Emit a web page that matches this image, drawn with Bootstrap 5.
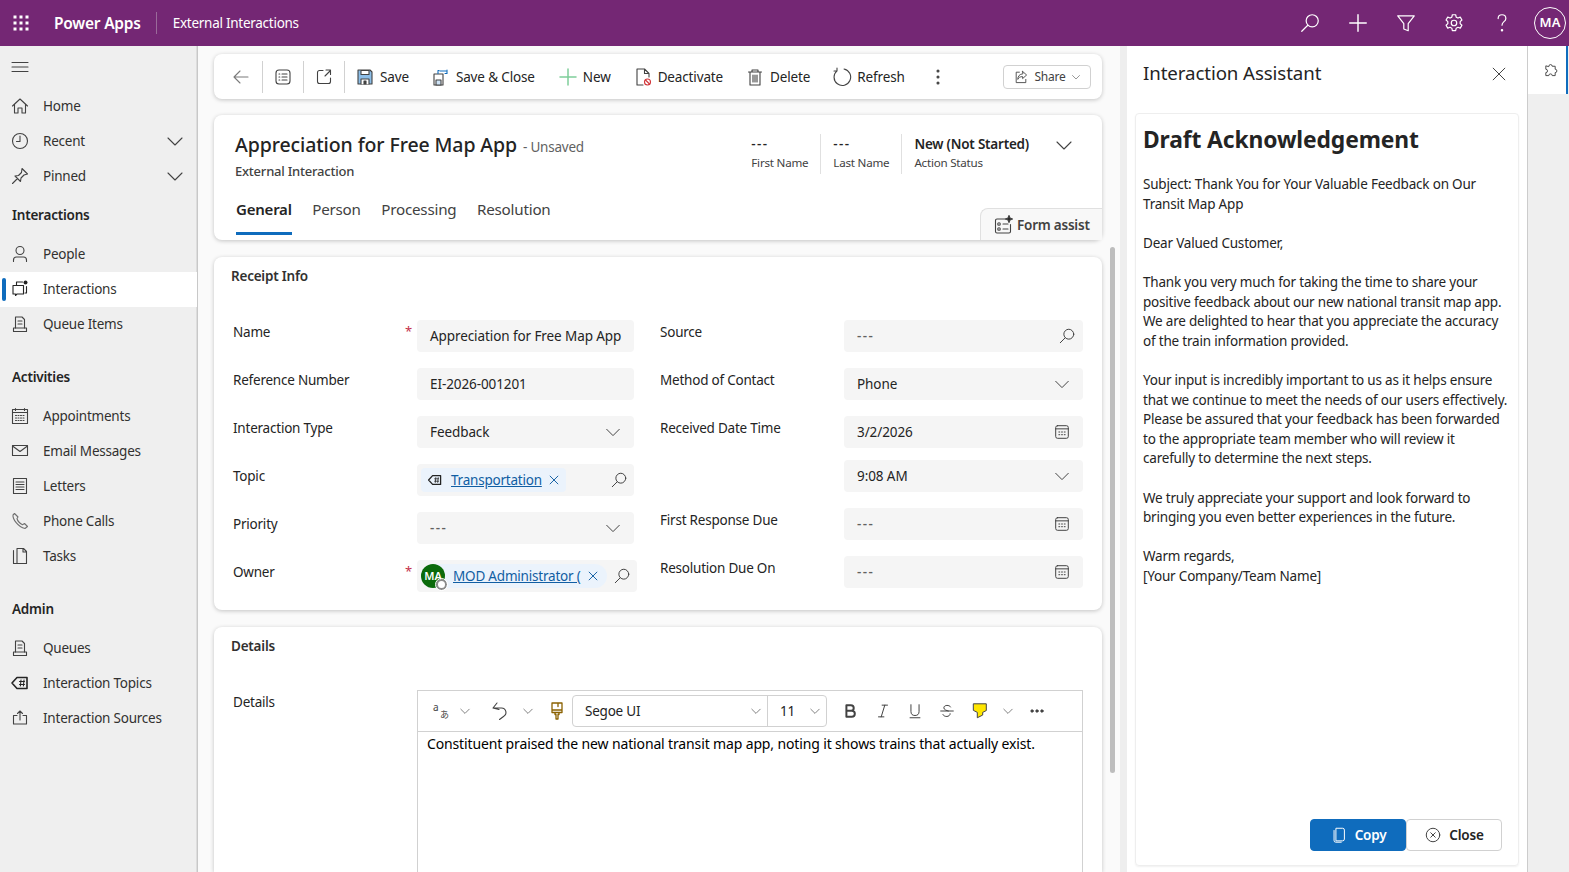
<!DOCTYPE html>
<html lang="en"><head><meta charset="utf-8"><title>External Interactions</title>
<link href="https://cdn.jsdelivr.net/npm/bootstrap@5.3.0/dist/css/bootstrap.min.css" rel="stylesheet">
<style>
html,body{height:100%;overflow:hidden}
body{font-family:"Noto Sans","Open Sans",sans-serif;font-size:13.5px;letter-spacing:-.22px;color:#242424;background:#faf9f8}
svg.ic{width:20px;height:20px;flex:none;fill:none;stroke:#424242;stroke-width:1.1;stroke-linecap:round;stroke-linejoin:round}
svg.ic.soft{stroke:#707070}
svg.ic.dark{stroke:#242424}
.topbar{height:46px;background:#742774;color:#fff;flex:none}
.topbar svg.ic{stroke:#fff}
.waffle{width:42px}
.brand{font-size:15.5px;font-weight:600;padding:0 15px 0 12px;border-right:1px solid #9a6a9a;line-height:22px}
.envname{padding-left:16px;font-size:13.5px;letter-spacing:-.27px}
.tact{width:48px;justify-content:center}
.tact svg.ic{width:22px;height:22px}
.avatar{width:32px;height:32px;border:1px solid #fff;border-radius:50%;font-size:13px;font-weight:600;margin:0 3px 0 8px;letter-spacing:0}
.workspace{height:826px}
.sidenav{width:198px;background:#efefef;border-right:1px solid #c8c8c8;flex:none;box-shadow:inset -1px 0 0 #ddd}
.burger{height:42.5px;padding-left:10px}
.navrow{height:35px;padding-left:10px;color:#323130;position:relative}
.navrow .lbl{margin-left:13px}
.navrow .chev{margin-left:auto;margin-right:12px}
.navrow.sel{background:#fff}
.navrow.sel::before{content:"";position:absolute;left:2px;top:6px;bottom:6px;width:4px;background:#0f6cbd;border-radius:2px}
.navhead{height:43px;padding-left:12px;font-weight:600;color:#242424}
.navgap{margin-top:14px}
.mainarea{width:922px;height:826px;overflow:hidden;padding:8px 18px 0 16px;position:relative;flex:none;background:#fafafa}
.sheet{background:#fff;border-radius:8px;box-shadow:0 1px 4px rgba(0,0,0,.22);border:0}
.cmdbar{height:45px;margin-bottom:16px;padding:0 11px 0 17px}
.cmd{height:45px;white-space:nowrap;color:#242424;letter-spacing:-.14px}
.cmd svg.ic{margin-right:5px}
.cmd span{padding-top:2px}
.cgap{margin-right:22px}
.cgap1{margin-right:23px}
.cmd svg.solo{margin-right:0}
.cmd svg.back{margin-right:11px}
.vsep{width:1px;height:32px;background:#d1d1d1;margin:0 10px 0 0}
.vsep.wide{margin-left:10px}
.dots3{margin-left:23px}
.sharebtn{height:24px;width:88px;border:1px solid #d1d1d1;border-radius:4px;font-size:12px;color:#424242;margin-left:auto;gap:5px;margin-right:0}
.sharebtn svg.ic{width:16px;height:16px}
.sharebtn svg.tiny{width:10px;height:10px}
.headcard{height:125px;margin-bottom:17px;position:relative}
.rectitle{font-size:19.5px;font-weight:500;color:#242424;letter-spacing:-.1px;line-height:28px}
.unsaved{color:#616161;margin-left:6px}
.entity{font-size:13px;font-weight:500;color:#424242;line-height:18px;margin-top:3px}
.headtop{padding:16px 28px 0 21px;height:79px}
.sumf{padding:0 12px;height:40px;margin-top:3px;font-size:11.6px;line-height:17px;white-space:nowrap;color:#424242}
.sumf b{display:block;font-size:13.5px;font-weight:600;line-height:20px;color:#242424}
.sumf b.dash{font-weight:500;letter-spacing:1.4px}
.sumf+.sumf{border-left:1px solid #e0e0e0}
.sumchev{margin-top:4px;margin-left:13px}
.tabline{padding-left:22px;gap:20.5px;height:46px;font-size:15.2px;color:#424242}
.tabx{height:46px;line-height:30px;white-space:nowrap}
.tabx.on{font-weight:600;color:#242424;border-bottom:3px solid #0f6cbd;height:41px;align-self:flex-start;font-size:15px}
.formassist{margin-left:auto;width:122px;height:32px;background:#f8f8f8;border-top:1px solid #e0e0e0;border-left:1px solid #e0e0e0;border-top-left-radius:8px;font-weight:600;font-size:13.5px;gap:4px;padding:1px 0 0 12px;align-self:flex-end}
.sectitle{font-weight:600;color:#323130;line-height:20px}
.receipt{height:353px;margin-bottom:17px;padding:9px 19px 0 17px}
.formcols{margin-top:34px;margin-left:2px;gap:26px}
.fcol{width:401px;flex:none}
.fcol2{width:423px;flex:none}
.frow{height:32px;margin-bottom:16px;position:relative}
.frow.tight{margin-bottom:12px}
.flabel{width:184px;flex:none;line-height:24px;color:#242424}
.star{position:absolute;left:172px;top:2px;color:#c4314b;font-size:13px}
.fbox{flex:1;height:32px;background:#f5f5f5;border-radius:4px;padding:0 12px 0 13px;min-width:0;white-space:nowrap;letter-spacing:-.09px}
.fbox .endic{margin-left:auto}
.fbox svg.ic{width:18px;height:18px}
.fbox svg.srch{margin-right:-5px}
.fbox svg.srch2{margin-right:2px}
.muted{color:#616161;letter-spacing:1.4px;font-weight:500}
.tagbox{padding:0 4px;margin-right:0}
.topictag{height:24px;background:#ebf3fc;border-radius:4px;width:145px;padding-left:6px;letter-spacing:-.22px}
.topictag svg.ic{width:16px;height:16px;margin-right:8px;stroke:#242424}
.alink{color:#115ea3;text-decoration:underline}
svg.ic.xic,.topictag svg.ic.xic{width:12px;height:12px;stroke:#115ea3;stroke-width:1.6;margin-left:6px;margin-right:0}
.ownerbox{flex:none;width:220px;letter-spacing:-.2px}
.ownertag{height:24px;background:#ebf3fc;border-radius:12px;width:186px;position:relative}
.ava{width:24px;height:24px;border-radius:50%;background:#0b6a0b;color:#fff;font-size:11px;font-weight:600;flex:none;position:relative;letter-spacing:0}
.ava::after{content:"";position:absolute;right:-2px;bottom:-2px;width:11px;height:11px;border-radius:50%;background:#fff;border:2px solid #8a8a8a;outline:1px solid #fff}
.ownername{width:132px;margin-left:8px;white-space:nowrap}
.ownertag svg.ic.xic{margin-left:2px}
.detailcard{height:245px;padding:9px 19px 0 17px;border-radius:8px 8px 0 0}
.dbody{margin-top:34px;margin-left:2px}
.editor{flex:1;border:1px solid #d1d1d1;border-bottom:0;height:182px}
.edbar{height:41px;border-bottom:1px solid #d1d1d1;padding-left:15px;position:relative}
.edbar svg.ic{width:18px;height:18px}
.edbar svg.mini{width:12px;height:12px}
.edbar svg.tall{width:20px;height:20px;margin:0 -1px}
.transl{width:18px;height:18px;font-size:10px;line-height:10px;letter-spacing:0;position:relative;flex:none;color:#424242}
.transl i{font-style:normal;display:block}
.transl i+i{font-family:"Noto Sans CJK JP",sans-serif;font-size:9px;margin:-2px 0 0 7px}
.fontsel{height:32px;border:1px solid #d1d1d1;border-radius:4px;width:255px;margin:0 6px 0 6px}
.fs1{width:195px;height:30px;padding-left:12px;border-right:1px solid #d1d1d1}
.fs2{flex:1;height:30px;padding-left:12px}
.fontsel svg{margin-left:auto;margin-right:5px}
.edtext{padding:2px 9px;font-size:14px;line-height:20px;color:#000;letter-spacing:-.14px}
.m8{margin-left:8px}.m14r{margin-right:14px}.m15r{margin-right:15px}.m20r{margin-right:20px}
.m14x{margin:0 14px 0 13px}.m13r{margin-right:13px}
.ms8{margin-left:8px}
.thumb{position:absolute;right:5px;top:201px;width:5px;height:526px;background:#bdbdbd;border-radius:3px}
.gutter{width:7px;background:#eee;flex:none}
.assist{width:400px;background:#fff;flex:none}
.asshead{height:67px;padding:0 19px 12px 16px;font-size:18.7px;font-weight:400;letter-spacing:-.1px;color:#242424}
.asshead svg.ic{width:18px;height:18px}
.asscard{height:753px;margin:0 8px 0 8px;border:1px solid #eee;border-radius:4px;padding:8px 8px 8px 7px;position:relative;box-shadow:0 1px 2px rgba(0,0,0,.06)}
.asstitle{font-size:22.8px;font-weight:700;line-height:36px;color:#242424;letter-spacing:-.1px;margin:0 0 17px}
.asstext{white-space:pre-line;line-height:19.6px;font-size:13.5px;color:#242424;margin:0;letter-spacing:-.2px}
.assbtns{position:absolute;right:16px;bottom:14px}
.bcopy,.bclose{height:32px;width:96px;border-radius:4px;font-weight:600;font-size:13.5px;gap:7px;padding:0;letter-spacing:-.2px;--bs-btn-border-radius:4px}
.bcopy{background:#0f6cbd;color:#fff;border:1px solid #0f6cbd}
.bcopy svg.ic{stroke:#fff;width:18px;height:18px}
.bclose{background:#fff;color:#242424;border:1px solid #d1d1d1}
.bclose svg.ic{width:18px;height:18px}
.rail{width:42px;background:#efefef;border-left:1px solid #ccc;flex:1}
.railtab{height:48px;background:#fff;border-right:2px solid #0f6cbd;margin-right:1px;padding-left:14px}
.railtab svg.ic{width:17px;height:17px}
</style></head><body>
<svg class="d-none" xmlns="http://www.w3.org/2000/svg">
<symbol id="i-search" viewBox="0 0 20 20"><circle cx="12" cy="8" r="5.5"/><path d="M8 12l-5.5 5.5"/></symbol>
<symbol id="i-chev" viewBox="0 0 20 20"><path d="M3 7l7 7 7-7"/></symbol>
<symbol id="i-cal" viewBox="0 0 20 20"><rect x="3" y="3" width="14" height="14" rx="2"/><path d="M3 6.500h14"/><path d="M6.500 10h1M9.500 10h1M12.500 10h1M6.500 13h1M9.500 13h1M12.500 13h1"/></symbol>
<symbol id="i-queue" viewBox="0 0 20 20"><path d="M5.500 14V3h6.500l2.500 2.500V14"/><path d="M3.500 14v3.500h13V14zM8 7h4M8 10h4"/></symbol>
<symbol id="i-topic" viewBox="0 0 20 20"><path d="M7 4.500h10v11H7l-5-5.500z" stroke-width="1.600"/><path d="M9.500 8.500h5M9.500 11.500h5M11 7l-.6 6M14 7l-.6 6" stroke-width="1"/></symbol>
<symbol id="i-x" viewBox="0 0 20 20"><path d="M3.500 3.500l13 13M16.500 3.500l-13 13"/></symbol>
<symbol id="i-inter" viewBox="0 0 20 20"><path d="M6.500 6V3h6M3 6.500h10.500v8.500H7l-1.500 1.500V15H3zM16.500 7.500V14H15"/><circle cx="15.500" cy="3.500" r="2" fill="#242424" stroke="none"/></symbol>
</svg>

<header class="topbar d-flex align-items-center">
  <div class="waffle d-flex justify-content-center"><svg class="ic" viewBox="0 0 20 20"><g fill="#fff" stroke="none"><rect x="2.500" y="2.500" width="3" height="3"/><rect x="8.500" y="2.500" width="3" height="3"/><rect x="14.500" y="2.500" width="3" height="3"/><rect x="2.500" y="8.500" width="3" height="3"/><rect x="8.500" y="8.500" width="3" height="3"/><rect x="14.500" y="8.500" width="3" height="3"/><rect x="2.500" y="14.500" width="3" height="3"/><rect x="8.500" y="14.500" width="3" height="3"/><rect x="14.500" y="14.500" width="3" height="3"/></g></svg></div>
  <span class="brand">Power Apps</span><span class="envname">External Interactions</span>
  <div class="ms-auto d-flex align-items-center">
    <div class="tact d-flex"><svg class="ic"><use href="#i-search"/></svg></div>
    <div class="tact d-flex"><svg class="ic" viewBox="0 0 20 20"><path d="M10 2.500v15M2.500 10h15" stroke-width="1.300"/></svg></div>
    <div class="tact d-flex"><svg class="ic" viewBox="0 0 20 20"><path d="M2.500 3.500h15L12 10.500v6.500l-4-1.500v-5z"/></svg></div>
    <div class="tact d-flex"><svg class="ic" viewBox="0 0 20 20"><path d="M8.500 2.500h3l.5 2.200 1.600.8 2.100-.8 1.500 2.600-1.600 1.500v1.800l1.600 1.500-1.500 2.600-2.100-.8-1.600.8-.5 2.200h-3l-.5-2.200-1.600-.8-2.100.8-1.500-2.600 1.600-1.500V8.800L2.800 7.300l1.500-2.600 2.100.8L8 4.700z"/><circle cx="10" cy="10" r="2.500"/></svg></div>
    <div class="tact d-flex"><svg class="ic" viewBox="0 0 20 20"><path d="M6.500 6c0-2.200 1.500-3.500 3.500-3.500s3.500 1.400 3.500 3.300c0 3-3.500 3-3.500 6.200"/><circle cx="10" cy="16.500" r=".6" fill="#fff"/></svg></div>
    <div class="avatar d-flex align-items-center justify-content-center">MA</div>
  </div>
</header>

<div class="workspace d-flex">
  <nav class="sidenav">
    <div class="burger d-flex align-items-center"><svg class="ic" viewBox="0 0 20 20"><path d="M2 5.500h16M2 10h16M2 14.500h16"/></svg></div>
    <div class="navrow d-flex align-items-center"><svg class="ic" viewBox="0 0 20 20"><path d="M2.500 10L10 3l7.500 7M4.500 8.500V17h3.500v-5h4v5h3.500V8.500"/></svg><span class="lbl">Home</span></div>
    <div class="navrow d-flex align-items-center"><svg class="ic" viewBox="0 0 20 20"><circle cx="10" cy="10" r="7.500"/><path d="M10 5v5.500H6.500"/></svg><span class="lbl">Recent</span><svg class="ic chev"><use href="#i-chev"/></svg></div>
    <div class="navrow d-flex align-items-center"><svg class="ic" viewBox="0 0 20 20"><path d="M12 2.500l5.500 5.500-3.500 1-3 3-.5 3.500L5 10l3.500-.5 3-3zM7.500 12.500L2.500 17.500"/></svg><span class="lbl">Pinned</span><svg class="ic chev"><use href="#i-chev"/></svg></div>
    <div class="navhead d-flex align-items-center">Interactions</div>
    <div class="navrow d-flex align-items-center"><svg class="ic" viewBox="0 0 20 20"><circle cx="10" cy="6.500" r="4"/><path d="M3.500 17.500v-1.500c0-2 1.500-3 3-3h7c1.500 0 3 1 3 3v1.500"/></svg><span class="lbl">People</span></div>
    <div class="navrow sel d-flex align-items-center"><svg class="ic dark"><use href="#i-inter"/></svg><span class="lbl">Interactions</span></div>
    <div class="navrow d-flex align-items-center"><svg class="ic"><use href="#i-queue"/></svg><span class="lbl">Queue Items</span></div>
    <div class="navhead navgap d-flex align-items-center">Activities</div>
    <div class="navrow d-flex align-items-center"><svg class="ic" viewBox="0 0 20 20"><path d="M2.500 3.500h15v14h-15zM2.500 6.500h15M5.500 2.500v2M14.500 2.500v2"/><path d="M5.500 9.500h9M5.500 12h9M5.500 14.500h9" stroke-dasharray="1 1.500"/></svg><span class="lbl">Appointments</span></div>
    <div class="navrow d-flex align-items-center"><svg class="ic" viewBox="0 0 20 20"><rect x="2.500" y="4.500" width="15" height="10"/><path d="M2.500 5l7.500 5.500L17.500 5"/></svg><span class="lbl">Email Messages</span></div>
    <div class="navrow d-flex align-items-center"><svg class="ic" viewBox="0 0 20 20"><rect x="3.500" y="2.500" width="13" height="15"/><path d="M6 6h8M6 8.500h8M6 11h8M6 13.500h8"/></svg><span class="lbl">Letters</span></div>
    <div class="navrow d-flex align-items-center"><svg class="ic soft" viewBox="0 0 20 20"><path d="M4.500 2.500L3 4c-.5 4 5 12 12 13.500l2.500-2-3-3-2 1.200C10 12.500 7.500 9.500 7 7.500l1-1.500z"/></svg><span class="lbl">Phone Calls</span></div>
    <div class="navrow d-flex align-items-center"><svg class="ic" viewBox="0 0 20 20"><path d="M3.500 4.500v13H7M7 2.500h6.500l3 3v12H7zM13 2.500V6h3.500"/></svg><span class="lbl">Tasks</span></div>
    <div class="navhead navgap d-flex align-items-center">Admin</div>
    <div class="navrow d-flex align-items-center"><svg class="ic"><use href="#i-queue"/></svg><span class="lbl">Queues</span></div>
    <div class="navrow d-flex align-items-center"><svg class="ic dark"><use href="#i-topic"/></svg><span class="lbl">Interaction Topics</span></div>
    <div class="navrow d-flex align-items-center"><svg class="ic" viewBox="0 0 20 20"><path d="M7 7.500H3.500V16h13V7.500H13M10 12V3M7.500 5.500L10 3l2.500 2.500"/></svg><span class="lbl">Interaction Sources</span></div>
  </nav>

  <main class="mainarea">
    <div class="sheet cmdbar d-flex align-items-center">
      <div class="cmd d-flex align-items-center"><svg class="ic back" viewBox="0 0 20 20"><path d="M17 10H3M9 4l-6 6 6 6" stroke="#7a7a7a"/></svg></div>
      <div class="vsep"></div>
      <div class="cmd d-flex align-items-center"><svg class="ic solo" viewBox="0 0 20 20"><rect x="3" y="3" width="14" height="14" rx="3"/><path d="M9 7h5M9 10h5M9 13h5M6 7h.8M6 10h.8M6 13h.8"/></svg></div>
      <div class="vsep wide"></div>
      <div class="cmd d-flex align-items-center"><svg class="ic solo" viewBox="0 0 20 20"><path d="M9 3.500H5.500a2 2 0 0 0-2 2v9a2 2 0 0 0 2 2h9a2 2 0 0 0 2-2V11M11 9l5.500-5.500M12 3h4.500v4.500"/></svg></div>
      <div class="vsep wide"></div>
      <div class="cmd cgap d-flex align-items-center"><svg class="ic" viewBox="0 0 20 20"><path d="M3 3h12l2 2v12H3z" fill="#8cbee8" stroke="#424242"/><path d="M6 3.500h8v4H6z" fill="#fff"/><path d="M6 17v-5h8v5" fill="#fff"/><path d="M9 14h2v3H9z" fill="#424242"/></svg><span>Save</span></div>
      <div class="cmd cgap1 d-flex align-items-center"><svg class="ic" viewBox="0 0 20 20"><path d="M3 7h9v11H3z"/><path d="M5 13h5v5H5z" fill="#cfe4f7"/><path d="M8 3.500h-1v3M16 3v3.500h-2M9 4h6" stroke="#0f6cbd"/></svg><span>Save &amp; Close</span></div>
      <div class="cmd cgap d-flex align-items-center"><svg class="ic" viewBox="0 0 20 20"><path d="M10 2v16M2 10h16" stroke="#7fce9a" stroke-width="1.500"/></svg><span>New</span></div>
      <div class="cmd cgap d-flex align-items-center"><svg class="ic" viewBox="0 0 20 20"><path d="M10 18H4V2h7.500L16 6.500V10M11.500 2v4.500H16"/><circle cx="14.500" cy="15" r="3" stroke="#d13438" fill="#fff"/><path d="M12.500 13l4 4" stroke="#d13438"/></svg><span>Deactivate</span></div>
      <div class="cmd cgap d-flex align-items-center"><svg class="ic" viewBox="0 0 20 20"><path d="M3.500 5h13M7 5V3h6v2M5 5v13h10V5M8 8v7M10 8v7M12 8v7"/></svg><span>Delete</span></div>
      <div class="cmd d-flex align-items-center"><svg class="ic" viewBox="0 0 20 20"><path d="M12 2A8.300 8.300 0 1 1 5 3.800M5 1v3H2"/></svg><span>Refresh</span></div>
      <svg class="ic dots3" viewBox="0 0 20 20"><circle cx="10" cy="4" r="1" fill="#424242"/><circle cx="10" cy="10" r="1" fill="#424242"/><circle cx="10" cy="16" r="1" fill="#424242"/></svg>
      <div class="sharebtn d-flex align-items-center justify-content-center"><svg class="ic" viewBox="0 0 20 20"><path d="M8 4H4v13h12v-4M12 3l5 4.500-5 4.500V9.500c-3 0-5 1-6 3.500 0-4 2-6.500 6-7z"/></svg>Share<svg class="ic tiny"><use href="#i-chev"/></svg></div>
    </div>

    <div class="sheet headcard">
      <div class="headtop d-flex">
        <div>
          <div class="d-flex align-items-baseline"><span class="rectitle">Appreciation for Free Map App</span><span class="unsaved">- Unsaved</span></div>
          <div class="entity">External Interaction</div>
        </div>
        <div class="ms-auto d-flex align-items-start">
          <div class="sumf"><b class="dash">---</b>First Name</div>
          <div class="sumf"><b class="dash">---</b>Last Name</div>
          <div class="sumf"><b>New (Not Started)</b>Action Status</div>
          <svg class="ic sumchev"><use href="#i-chev"/></svg>
        </div>
      </div>
      <div class="tabline d-flex">
        <div class="tabx on">General</div><div class="tabx">Person</div><div class="tabx">Processing</div><div class="tabx">Resolution</div>
        <div class="formassist d-flex align-items-center"><svg class="ic" viewBox="0 0 20 20"><path d="M12.500 4H4a1.500 1.500 0 0 0-1.500 1.500v11A1.500 1.500 0 0 0 4 18h12a1.500 1.500 0 0 0 1.500-1.500V9.500M10 9h5M10 14h5"/><circle cx="6" cy="9" r="1.300"/><circle cx="6" cy="14" r="1.300"/><path d="M16 .5l1 2.500 2.500 1-2.500 1-1 2.500-1-2.500-2.500-1 2.500-1z" fill="#242424"/></svg>Form assist</div>
      </div>
    </div>

    <section class="sheet receipt">
      <div class="sectitle">Receipt Info</div>
      <div class="formcols d-flex">
        <div class="fcol">
          <div class="frow d-flex"><div class="flabel">Name</div><span class="star">*</span><div class="fbox d-flex align-items-center">Appreciation for Free Map App</div></div>
          <div class="frow d-flex"><div class="flabel">Reference Number</div><div class="fbox d-flex align-items-center">EI-2026-001201</div></div>
          <div class="frow d-flex"><div class="flabel">Interaction Type</div><div class="fbox d-flex align-items-center">Feedback<svg class="ic endic"><use href="#i-chev"/></svg></div></div>
          <div class="frow d-flex"><div class="flabel">Topic</div><div class="fbox tagbox d-flex align-items-center"><div class="topictag d-flex align-items-center"><svg class="ic"><use href="#i-topic"/></svg><a class="alink" href="#">Transportation</a><svg class="ic xic"><use href="#i-x"/></svg></div><svg class="ic endic srch2"><use href="#i-search"/></svg></div></div>
          <div class="frow d-flex"><div class="flabel">Priority</div><div class="fbox d-flex align-items-center"><span class="muted">---</span><svg class="ic endic"><use href="#i-chev"/></svg></div></div>
          <div class="frow d-flex"><div class="flabel">Owner</div><span class="star">*</span><div class="fbox ownerbox tagbox d-flex align-items-center"><div class="ownertag d-flex align-items-center"><div class="ava d-flex align-items-center justify-content-center">MA</div><div class="ownername"><a class="alink" href="#">MOD Administrator (</a></div><svg class="ic xic"><use href="#i-x"/></svg></div><svg class="ic endic srch2"><use href="#i-search"/></svg></div></div>
        </div>
        <div class="fcol2">
          <div class="frow d-flex"><div class="flabel">Source</div><div class="fbox d-flex align-items-center"><span class="muted">---</span><svg class="ic endic srch"><use href="#i-search"/></svg></div></div>
          <div class="frow d-flex"><div class="flabel">Method of Contact</div><div class="fbox d-flex align-items-center">Phone<svg class="ic endic"><use href="#i-chev"/></svg></div></div>
          <div class="frow tight d-flex"><div class="flabel">Received Date Time</div><div class="fbox d-flex align-items-center">3/2/2026<svg class="ic endic"><use href="#i-cal"/></svg></div></div>
          <div class="frow d-flex"><div class="flabel"></div><div class="fbox d-flex align-items-center">9:08 AM<svg class="ic endic"><use href="#i-chev"/></svg></div></div>
          <div class="frow d-flex"><div class="flabel">First Response Due</div><div class="fbox d-flex align-items-center"><span class="muted">---</span><svg class="ic endic"><use href="#i-cal"/></svg></div></div>
          <div class="frow d-flex"><div class="flabel">Resolution Due On</div><div class="fbox d-flex align-items-center"><span class="muted">---</span><svg class="ic endic"><use href="#i-cal"/></svg></div></div>
        </div>
      </div>
    </section>

    <section class="sheet detailcard">
      <div class="sectitle">Details</div>
      <div class="dbody d-flex">
        <div class="flabel">Details</div>
        <div class="editor">
          <div class="edbar d-flex align-items-center">
            <div class="transl"><i>a</i><i>あ</i></div>
            <svg class="ic mini m8 m20r"><use href="#i-chev"/></svg>
            <svg class="ic tall" viewBox="0 0 20 20"><path d="M7 2L3 7l6 1.500M3.500 7h8a4.500 4.500 0 0 1 2 8.500L9.500 18.500"/></svg>
            <svg class="ic mini m14x"><use href="#i-chev"/></svg>
            <svg class="ic tall" viewBox="0 0 20 20"><path d="M5 2h10v9.500H5zM11 2v3.500M5 9h10M8 11.500v2h1v4.500h2v-4.500h1v-2" stroke="#8a6100" stroke-width="1.300"/></svg>
            <div class="fontsel d-flex align-items-center">
              <div class="fs1 d-flex align-items-center">Segoe UI<svg class="ic mini"><use href="#i-chev"/></svg></div>
              <div class="fs2 d-flex align-items-center">11<svg class="ic mini"><use href="#i-chev"/></svg></div>
            </div>
            <svg class="ic ms8 m15r" viewBox="0 0 20 20"><path d="M6 3.500h5a3 3 0 0 1 0 6.300H6zM6 9.800h6a3.300 3.300 0 0 1 0 6.700H6z" stroke-width="2.200"/></svg>
            <svg class="ic m14r" viewBox="0 0 20 20"><path d="M9 3.500h6M5 16.500h6M12 3.500l-4 13"/></svg>
            <svg class="ic m14r" viewBox="0 0 20 20"><path d="M5.500 3v7.500a4.500 4.500 0 0 0 9 0V3M4.500 17.500h11"/></svg>
            <svg class="ic m15r" viewBox="0 0 20 20"><path d="M14 5.500C13 3 6.500 3 6.500 6.500c0 2 3 3 5 3.500M3 10h14M13.500 13c.5 3.500-6.500 4.500-8 1"/></svg>
            <svg class="ic m13r" viewBox="0 0 20 20"><path d="M3 2h14v7.500l-4 2v3l-6 3v-6l-4-2z" fill="#ffe600" stroke="#424242"/></svg>
            <svg class="ic mini m14r"><use href="#i-chev"/></svg>
            <svg class="ic" viewBox="0 0 20 20"><circle cx="4.500" cy="10" r="1.300" fill="#424242"/><circle cx="10" cy="10" r="1.300" fill="#424242"/><circle cx="15.500" cy="10" r="1.300" fill="#424242"/></svg>
          </div>
          <div class="edtext">Constituent praised the new national transit map app, noting it shows trains that actually exist.</div>
        </div>
      </div>
    </section>
    <div class="thumb"></div>
  </main>

  <div class="gutter"></div>

  <aside class="assist">
    <div class="asshead d-flex align-items-center justify-content-between"><span>Interaction Assistant</span><svg class="ic" viewBox="0 0 20 20"><use href="#i-x"/></svg></div>
    <div class="asscard">
      <h2 class="asstitle">Draft Acknowledgement</h2>
      <p class="asstext">Subject: Thank You for Your Valuable Feedback on Our
Transit Map App

Dear Valued Customer,

Thank you very much for taking the time to share your
positive feedback about our new national transit map app.
We are delighted to hear that you appreciate the accuracy
of the train information provided.

Your input is incredibly important to us as it helps ensure
that we continue to meet the needs of our users effectively.
Please be assured that your feedback has been forwarded
to the appropriate team member who will review it
carefully to determine the next steps.

We truly appreciate your support and look forward to
bringing you even better experiences in the future.

Warm regards,
[Your Company/Team Name]</p>
      <div class="assbtns d-flex">
        <button class="btn bcopy d-flex align-items-center justify-content-center" type="button"><svg class="ic" viewBox="0 0 20 20"><path d="M7 2.500h7a2 2 0 0 1 2 2v10a2 2 0 0 1-2 2H7z"/><path d="M4.500 5v11a2 2 0 0 0 2 2h6"/></svg>Copy</button>
        <button class="btn bclose d-flex align-items-center justify-content-center" type="button"><svg class="ic" viewBox="0 0 20 20"><circle cx="10" cy="10" r="7.500"/><path d="M7.500 7.500l5 5M12.500 7.500l-5 5"/></svg>Close</button>
      </div>
    </div>
  </aside>
  <div class="rail"><div class="railtab d-flex align-items-center"><svg class="ic" viewBox="0 0 20 20"><path d="M8 5a2 2 0 0 1 4 0h3.500v3.500a2 2 0 0 1 0 4V16H12a2 2 0 0 0-4 0H4.500v-3.500a2 2 0 0 0 0-4V5z"/></svg></div></div>
</div>
<script src="https://cdn.jsdelivr.net/npm/bootstrap@5.3.0/dist/js/bootstrap.bundle.min.js"></script>
</body></html>
